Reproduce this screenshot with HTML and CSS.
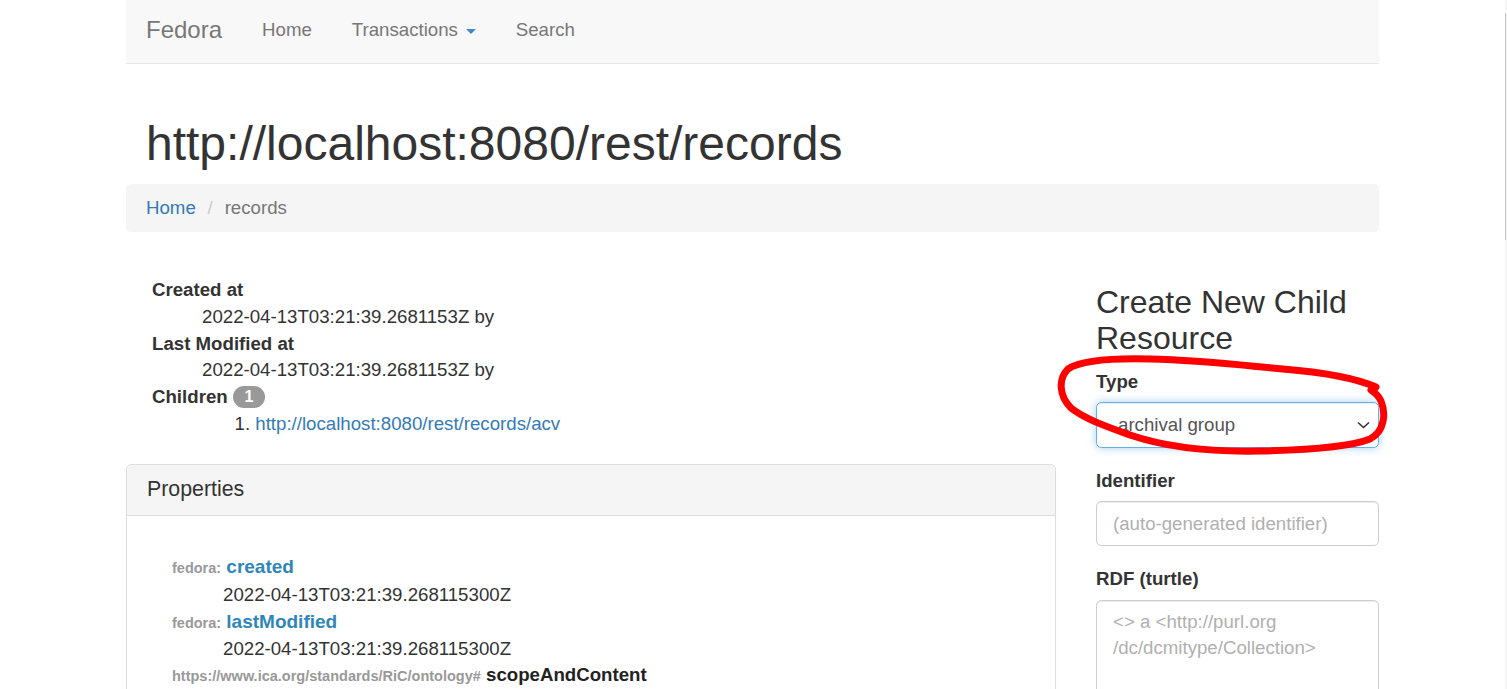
FILE: index.html
```html
<!DOCTYPE html>
<html lang="en">
<head>
<meta charset="utf-8">
<title>Fedora - http://localhost:8080/rest/records</title>
<link rel="stylesheet" href="styles.css">
</head>
<body>
<div class="container">
  <nav class="navbar">
    <a class="brand" href="#">Fedora</a>
    <ul class="nav">
      <li><a href="#">Home</a></li>
      <li><a href="#">Transactions <span class="caret"></span></a></li>
      <li><a href="#">Search</a></li>
    </ul>
  </nav>

  <h1 class="page-title">http://localhost:8080/rest/records</h1>

  <ol class="breadcrumb">
    <li><a href="#">Home</a></li>
    <li class="active">records</li>
  </ol>

  <div class="row">
    <div class="main">
      <dl class="meta">
        <dt>Created at</dt>
        <dd>2022-04-13T03:21:39.2681153Z by</dd>
        <dt>Last Modified at</dt>
        <dd>2022-04-13T03:21:39.2681153Z by</dd>
        <dt>Children <span class="badge">1</span></dt>
        <dd>
          <ol class="children">
            <li><a href="#">http://localhost:8080/rest/records/acv</a></li>
          </ol>
        </dd>
      </dl>

      <div class="panel">
        <div class="panel-heading">
          <h3 class="panel-title">Properties</h3>
        </div>
        <div class="panel-body">
          <dl class="props">
            <dt><span class="prefix">fedora:</span> <a class="prop-link" href="#">created</a></dt>
            <dd>2022-04-13T03:21:39.268115300Z</dd>
            <dt><span class="prefix">fedora:</span> <a class="prop-link" href="#">lastModified</a></dt>
            <dd>2022-04-13T03:21:39.268115300Z</dd>
            <dt><span class="prefix">https://www.ica.org/standards/RiC/ontology#</span> <span class="prop-name">scopeAndContent</span></dt>
          </dl>
        </div>
      </div>
    </div>

    <aside class="side">
      <h3 class="side-title">Create New Child Resource</h3>
      <form class="create-form">
        <div class="form-group">
          <label for="type">Type</label>
          <div class="select-wrap">
            <select id="type" class="form-control focused">
              <option>archival group</option>
              <option>basic container</option>
              <option>binary</option>
            </select>
            <svg class="chevron" width="13" height="8" viewBox="0 0 13 8" aria-hidden="true">
              <path d="M1 1.5 L6.5 6.5 L12 1.5" fill="none" stroke="#333" stroke-width="1.6"/>
            </svg>
          </div>
        </div>
        <div class="form-group">
          <label for="ident">Identifier</label>
          <input id="ident" class="form-control" type="text" placeholder="(auto-generated identifier)">
        </div>
        <div class="form-group">
          <label for="turtle">RDF (turtle)</label>
          <textarea id="turtle" class="form-control textarea" placeholder="&lt;&gt; a &lt;http://purl.org&#10;/dc/dcmitype/Collection&gt;"></textarea>
        </div>
      </form>
    </aside>
  </div>
</div>

<svg class="annotation" width="1507" height="689" viewBox="0 0 1507 689" aria-hidden="true">
  <path d="M1376,387 C1355,378 1320,372 1283,369 C1240,365 1200,360 1150,359 C1110,358 1080,361 1068,369 C1058,379 1059,396 1071,408 C1085,419 1105,426 1130,435 C1165,447 1210,452 1260,451 C1310,450 1350,447 1370,439 C1385,431 1386,413 1381,401 C1378,394 1372,391 1371,390" fill="none" stroke="#ff0000" stroke-width="7" stroke-linecap="round" stroke-linejoin="round"/>
</svg>

<div class="scrollbar"><div class="scroll-thumb"></div></div>
</body>
</html>
```

FILE: styles.css
```css
html {
  overflow: hidden;
}

body {
  margin: 0;
  font-family: "Liberation Sans", Arial, sans-serif;
  font-size: 18.67px;
  line-height: 26.67px;
  color: #333;
  background: #fff;
  position: relative;
}

a {
  color: #337ab7;
  text-decoration: none;
}

.container {
  width: 1253px;
  margin-left: 126px;
}

/* Navbar */
.navbar {
  display: flex;
  align-items: flex-start;
  height: 65.67px;
  margin-top: -3px;
  background: #f8f8f8;
  border-bottom: 1px solid #e7e7e7;
}

.brand {
  display: block;
  padding: 20px 20px;
  font-size: 24px;
  line-height: 26.67px;
  color: #777;
}

.nav {
  display: flex;
  list-style: none;
  margin: 0;
  padding: 0;
}

.nav a {
  display: block;
  padding: 20px 20px;
  color: #777;
}

.caret {
  display: inline-block;
  width: 0;
  height: 0;
  margin-left: 2.67px;
  vertical-align: middle;
  border-top: 5.33px solid #428bca;
  border-left: 5.33px solid transparent;
  border-right: 5.33px solid transparent;
}

/* Title */
.page-title {
  margin: 54.3px 0 13.33px;
  padding-left: 20px;
  font-size: 48px;
  line-height: 52.8px;
  font-weight: 500;
  color: #333;
}

/* Breadcrumb */
.breadcrumb {
  margin: 0 0 26.67px;
  padding: 10.67px 20px;
  list-style: none;
  background: #f5f5f5;
  border-radius: 5.33px;
}

.breadcrumb li {
  display: inline-block;
}

.breadcrumb li + li::before {
  content: "/\00a0";
  padding: 0 6.67px;
  color: #ccc;
}

.breadcrumb .active {
  color: #777;
}

/* Grid */
.row {
  display: flex;
  gap: 40px;
  align-items: flex-start;
}

.main {
  width: 930px;
  flex: none;
}

.side {
  width: 283px;
  flex: none;
}

/* Metadata list */
.meta {
  margin: 18.67px 0 26.67px;
  padding-left: 26px;
}

.meta dt,
.props dt {
  font-weight: 700;
}

.meta dd {
  margin-left: 50px;
}

.badge {
  display: inline-block;
  min-width: 13.33px;
  padding: 3px 9.33px;
  font-size: 16px;
  font-weight: 700;
  line-height: 16px;
  color: #fff;
  text-align: center;
  vertical-align: middle;
  background: #999;
  border-radius: 13.33px;
  position: relative;
  top: -1px;
}

.children {
  margin: 0;
  padding-left: 53.3px;
}

/* Panel */
.panel {
  border: 1px solid #ddd;
  border-radius: 5.33px;
  background: #fff;
  box-shadow: 0 1px 1px rgba(0, 0, 0, 0.05);
}

.panel-heading {
  padding: 13.33px 20px;
  background: #f5f5f5;
  border-bottom: 1px solid #ddd;
  border-radius: 4.33px 4.33px 0 0;
}

.panel-title {
  margin: 0;
  font-size: 21.33px;
  line-height: 23.47px;
  font-weight: 500;
  color: #333;
}

.panel-body {
  padding: 20px;
  min-height: 300px;
}

.props {
  margin: 18px 0 0;
  padding-left: 25px;
}

.props dt:last-of-type {
  margin-top: -1px;
}

.props dd {
  margin-left: 51px;
}

.prefix {
  font-size: 14.5px;
  color: #999;
}

.prop-link {
  font-size: 19px;
  color: #2f86b8;
}

.prop-name {
  color: #222;
}

/* Side form */
.side-title {
  margin: 26.67px 0 13.33px;
  font-size: 32px;
  line-height: 35.2px;
  font-weight: 500;
  color: #333;
}

.form-group {
  margin-bottom: 20px;
}

.form-group label {
  display: block;
  margin-bottom: 6.67px;
  font-weight: 700;
}

.form-control {
  display: block;
  box-sizing: border-box;
  width: 100%;
  height: 45.33px;
  margin: 0;
  padding: 8px 16px;
  font-family: inherit;
  font-size: 18.67px;
  line-height: 26.67px;
  color: #555;
  background: #fff;
  border: 1px solid #ccc;
  border-radius: 5.33px;
  box-shadow: inset 0 1px 1px rgba(0, 0, 0, 0.075);
  outline: none;
}

.form-control::placeholder {
  color: #b0b0b0;
  opacity: 1;
}

.select-wrap {
  position: relative;
}

select.form-control {
  appearance: none;
  -webkit-appearance: none;
  padding-left: 21px;
}

.form-control.focused {
  border-color: #66afe9;
  box-shadow: inset 0 1px 1px rgba(0, 0, 0, 0.075), 0 0 8px rgba(102, 175, 233, 0.6);
}

.chevron {
  position: absolute;
  right: 9px;
  top: 19px;
  pointer-events: none;
}

.textarea {
  height: 160px;
  resize: vertical;
}

/* Overlays */
.annotation {
  position: absolute;
  left: 0;
  top: 0;
  pointer-events: none;
}

.scrollbar {
  position: fixed;
  top: 0;
  right: 0;
  width: 2px;
  height: 689px;
  background: #f6f6f6;
}

.scroll-thumb {
  margin-top: 13px;
  width: 1px;
  height: 227px;
  background: #c4c4c4;
}
```
